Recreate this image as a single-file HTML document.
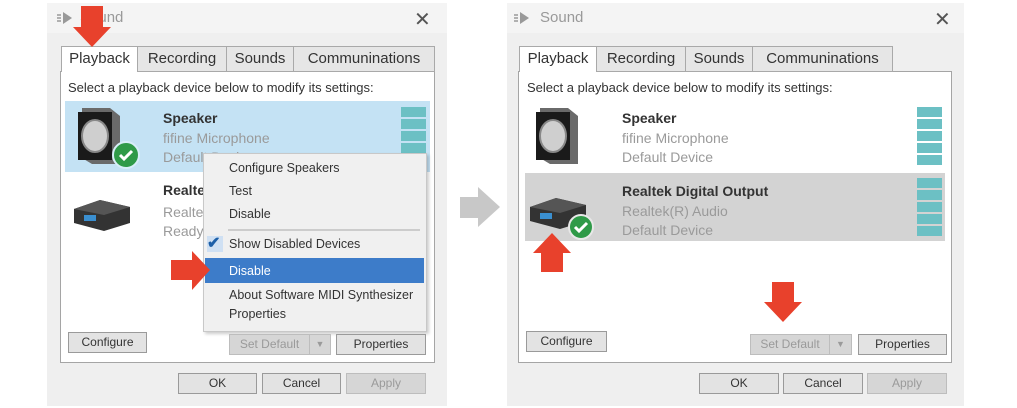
<!DOCTYPE html>
<html><head><meta charset="utf-8"><style>
*{margin:0;padding:0;box-sizing:border-box}
body{width:1017px;height:408px;background:#fff;position:relative;overflow:hidden;font-family:"Liberation Sans",sans-serif;color:#222}
.a{position:absolute}
.win{background:#efefef}
.title{background:#f4f4f4}
.tab{position:absolute;border:1px solid #a9a9a9;background:#e6e6e6;font-size:15px;text-align:center;line-height:24px;color:#333}
.tab.on{background:#fff;border-bottom:none;height:26px}
.panel{position:absolute;background:#fff;border:1px solid #a5a5a5}
.btn{position:absolute;border:1px solid #9a9a9a;background:#e3e3e3;font-size:12px;text-align:center;line-height:19px;color:#333}
.dis{color:#9a9a9a;background:#d6d6d6;border-color:#bdbdbd}
.t{position:absolute;font-size:14px;white-space:nowrap}
.g{color:#9a9a9a}
.b{font-weight:bold;color:#333;font-size:14px}
.m{position:absolute;font-size:12.5px;color:#333;white-space:nowrap}
.meter{position:absolute;width:25px}
.meter i{display:block;height:10px;background:#6cc0c4;margin-bottom:2px}
</style></head><body>

<!-- LEFT DIALOG -->
<div class="a win" style="left:47px;top:3px;width:400px;height:403px"></div>
<div class="a title" style="left:47px;top:3px;width:400px;height:30px"></div>
<svg class="a" style="left:56px;top:10px" width="20" height="16"><path d="M7 2 L16 8 L7 14 Z" fill="#999"/><path d="M1 5h4M1 8h4M1 11h4" stroke="#999" stroke-width="1.5"/></svg>
<div class="t" style="left:80px;top:9px;font-size:15px;color:#999">Sound</div>
<div class="t" style="left:414px;top:7px;font-size:20px;color:#555">✕</div>

<div class="panel" style="left:60px;top:71px;width:375px;height:292px"></div>
<div class="tab" style="left:137px;top:46px;width:90px;height:26px">Recording</div>
<div class="tab" style="left:226px;top:46px;width:68px;height:26px">Sounds</div>
<div class="tab" style="left:293px;top:46px;width:142px;height:26px">Communinations</div>
<div class="tab on" style="left:61px;top:46px;width:77px;">Playback</div>

<div class="t" style="left:68px;top:80px;font-size:13px;color:#333">Select a playback device below to modify its settings:</div>
<div class="a" style="left:65px;top:101px;width:365px;height:71px;background:#c4e2f4"></div>
<svg class="a" style="left:70px;top:104px" width="72" height="66">
<path d="M12 4 L40 4 L50 12 L50 60 L22 60 L12 54Z" fill="#6a6a6a"/>
<rect x="8" y="8" width="34" height="48" fill="#1a1a1a"/>
<ellipse cx="25" cy="32" rx="13" ry="16" fill="#cfcfcf" stroke="#888" stroke-width="2"/>
<circle cx="56" cy="51" r="13" fill="#2f9a48" stroke="#d8eef8" stroke-width="2"/>
<path d="M50 51 l4 4 l8 -8" stroke="#fff" stroke-width="3" fill="none"/>
</svg>
<div class="t b" style="left:163px;top:110px">Speaker</div>
<div class="t g" style="left:163px;top:130px">fifine Microphone</div>
<div class="t g" style="left:163px;top:149px">Default Device</div>
<div class="meter" style="left:401px;top:107px"><i></i><i></i><i></i><i></i><i></i></div>
<svg class="a" style="left:70px;top:195px" width="70" height="40">
<path d="M4 14 L30 5 L60 12 L60 28 L34 36 L4 28Z" fill="#333"/>
<path d="M4 14 L30 5 L60 12 L34 20Z" fill="#555"/>
<rect x="14" y="20" width="12" height="6" fill="#3a8fd0"/>
</svg>
<div class="t b" style="left:163px;top:182px">Realtek</div>
<div class="t g" style="left:163px;top:204px">Realtek</div>
<div class="t g" style="left:163px;top:223px">Ready</div>

<!-- context menu -->
<div class="a" style="left:203px;top:153px;width:224px;height:179px;background:#f0f0f0;border:1px solid #c8c8c8;box-shadow:2px 2px 3px rgba(0,0,0,.2)"></div>
<div class="m" style="left:229px;top:161px">Configure Speakers</div>
<div class="m" style="left:229px;top:184px">Test</div>
<div class="m" style="left:229px;top:207px">Disable</div>
<div class="a" style="left:228px;top:229px;width:192px;height:2px;background:#ccc"></div>
<div class="a" style="left:207px;top:236px;width:16px;height:16px;background:#cfe0f3"></div>
<div class="t" style="left:207px;top:233px;font-size:16px;color:#1c5fa8;font-weight:bold">✔</div>
<div class="m" style="left:229px;top:237px">Show Disabled Devices</div>
<div class="a" style="left:205px;top:258px;width:219px;height:25px;background:#3d7cc9"></div>
<div class="m" style="left:229px;top:264px;color:#fff">Disable</div>
<div class="m" style="left:229px;top:288px">About Software MIDI Synthesizer</div>
<div class="m" style="left:229px;top:307px">Properties</div>

<div class="btn" style="left:68px;top:332px;width:79px;height:21px">Configure</div>
<div class="btn dis" style="left:229px;top:334px;width:81px;height:21px">Set Default</div>
<div class="btn dis" style="left:309px;top:334px;width:22px;height:21px;font-size:9px">▼</div>
<div class="btn" style="left:336px;top:334px;width:90px;height:21px">Properties</div>
<div class="btn" style="left:178px;top:373px;width:79px;height:21px">OK</div>
<div class="btn" style="left:262px;top:373px;width:79px;height:21px">Cancel</div>
<div class="btn dis" style="left:346px;top:373px;width:80px;height:21px">Apply</div>

<svg class="a" style="left:72px;top:6px" width="40" height="42"><path d="M9 0H31V21H39L20 41L1 21H9Z" fill="#e8412c"/></svg>
<svg class="a" style="left:171px;top:250px" width="40" height="41"><path d="M0 10H21V1L39 20L21 40V30H0Z" fill="#e8412c"/></svg>

<svg class="a" style="left:460px;top:187px" width="41" height="41"><path d="M0 10H18V0L40 20L18 40V31H0Z" fill="#c8c8c8"/></svg>

<!-- RIGHT DIALOG -->
<div class="a win" style="left:507px;top:3px;width:457px;height:403px"></div>
<div class="a title" style="left:507px;top:3px;width:457px;height:30px"></div>
<svg class="a" style="left:513px;top:10px" width="20" height="16"><path d="M7 2 L16 8 L7 14 Z" fill="#999"/><path d="M1 5h4M1 8h4M1 11h4" stroke="#999" stroke-width="1.5"/></svg>
<div class="t" style="left:540px;top:9px;font-size:15px;color:#999">Sound</div>
<div class="t" style="left:934px;top:7px;font-size:20px;color:#555">✕</div>

<div class="panel" style="left:518px;top:71px;width:434px;height:292px"></div>
<div class="tab" style="left:596px;top:46px;width:90px;height:26px">Recording</div>
<div class="tab" style="left:685px;top:46px;width:68px;height:26px">Sounds</div>
<div class="tab" style="left:752px;top:46px;width:141px;height:26px">Communinations</div>
<div class="tab on" style="left:519px;top:46px;width:78px;">Playback</div>

<div class="t" style="left:527px;top:80px;font-size:13px;color:#333">Select a playback device below to modify its settings:</div>
<svg class="a" style="left:528px;top:104px" width="72" height="66">
<path d="M12 4 L40 4 L50 12 L50 60 L22 60 L12 54Z" fill="#6a6a6a"/>
<rect x="8" y="8" width="34" height="48" fill="#1a1a1a"/>
<ellipse cx="25" cy="32" rx="13" ry="16" fill="#cfcfcf" stroke="#888" stroke-width="2"/>
</svg>
<div class="t b" style="left:622px;top:110px">Speaker</div>
<div class="t g" style="left:622px;top:130px">fifine Microphone</div>
<div class="t g" style="left:622px;top:149px">Default Device</div>
<div class="meter" style="left:917px;top:107px"><i></i><i></i><i></i><i></i><i></i></div>

<div class="a" style="left:525px;top:173px;width:420px;height:68px;background:#d3d3d3"></div>
<svg class="a" style="left:528px;top:193px" width="72" height="48">
<path d="M2 14 L28 5 L58 12 L58 28 L32 36 L2 28Z" fill="#333"/>
<path d="M2 14 L28 5 L58 12 L32 20Z" fill="#555"/>
<rect x="12" y="20" width="12" height="6" fill="#3a8fd0"/>
<circle cx="53" cy="34" r="12" fill="#2f9a48" stroke="#e8e8e8" stroke-width="2"/>
<path d="M47 34 l4 4 l8 -8" stroke="#fff" stroke-width="3" fill="none"/>
</svg>
<div class="t b" style="left:622px;top:183px">Realtek Digital Output</div>
<div class="t g" style="left:622px;top:203px">Realtek(R) Audio</div>
<div class="t g" style="left:622px;top:222px">Default Device</div>
<div class="meter" style="left:917px;top:178px"><i></i><i></i><i></i><i></i><i></i></div>

<div class="btn" style="left:526px;top:331px;width:81px;height:21px">Configure</div>
<div class="btn dis" style="left:750px;top:334px;width:80px;height:21px">Set Default</div>
<div class="btn dis" style="left:829px;top:334px;width:23px;height:21px;font-size:9px">▼</div>
<div class="btn" style="left:858px;top:334px;width:89px;height:21px">Properties</div>
<div class="btn" style="left:699px;top:373px;width:80px;height:21px">OK</div>
<div class="btn" style="left:783px;top:373px;width:80px;height:21px">Cancel</div>
<div class="btn dis" style="left:867px;top:373px;width:80px;height:21px">Apply</div>

<svg class="a" style="left:532px;top:233px" width="40" height="40"><path d="M20 0L39 20H31V39H9V20H1Z" fill="#e8412c"/></svg>
<svg class="a" style="left:763px;top:282px" width="40" height="41"><path d="M9 0H31V20H39L20 40L1 20H9Z" fill="#e8412c"/></svg>
</body></html>
